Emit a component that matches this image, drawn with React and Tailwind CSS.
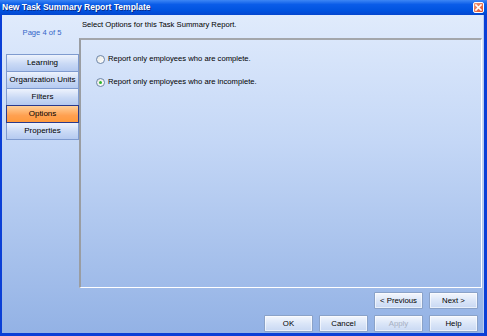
import React from "react";

const font = { fontFamily: '"Liberation Sans", Arial, sans-serif' };

function SideBtn({ label, active }) {
  return (
    <div
      className={
        "h-[18px] -mt-px first:mt-0 flex items-center justify-center text-[8px] text-black border " +
        (active
          ? "border-[#2a3a8c] bg-[linear-gradient(#ffd09a,#ffa050_60%,#ff9a3c)] relative z-10"
          : "border-[#7f9bcf] bg-[linear-gradient(#eef3fd,#c9d9f5_55%,#b5caf0)]")
      }
    >
      {label}
    </div>
  );
}

function Btn({ label, disabled }) {
  return (
    <div
      className={
        "w-[49px] h-[17px] flex items-center justify-center text-[7.8px] border border-[#8aa2c8] rounded-[1px] bg-[linear-gradient(#f4f7fd,#dbe6f8_50%,#c8d8f3)] shadow-[inset_0_0_0_1px_rgba(255,255,255,0.6)] " +
        (disabled ? "text-[#a7b0c2]" : "text-black")
      }
    >
      {label}
    </div>
  );
}

function Radio({ checked, label }) {
  return (
    <div className="flex items-center gap-[3px] h-[10px]">
      <div className="w-[9px] h-[9px] rounded-full border border-[#6e86a8] bg-[linear-gradient(135deg,#e6e6e0,#ffffff)] flex items-center justify-center">
        {checked && <div className="w-[3px] h-[3px] rounded-full bg-[#2fb52f]" />}
      </div>
      <span className="text-[7.65px] text-black leading-none">{label}</span>
    </div>
  );
}

export default function App() {
  return (
    <div className="w-[487px] h-[336px] flex flex-col bg-[#0a3fd6] overflow-hidden" style={font}>
      <div className="h-[15px] flex items-center justify-between pl-[2px] pr-[2px] bg-[linear-gradient(#3d86f5,#0a5ce8_30%,#0053e0_70%,#0446cf)]">
        <span className="text-white font-bold text-[8.5px] leading-none [text-shadow:1px_1px_0_#0a2a88]">
          New Task Summary Report Template
        </span>
        <div className="w-[11px] h-[11px] rounded-[2px] border border-white bg-[linear-gradient(135deg,#f09a7c,#e0502a)] flex items-center justify-center mr-[1px]">
          <svg width="7" height="7" viewBox="0 0 7 7">
            <path d="M1 1 L6 6 M6 1 L1 6" stroke="white" strokeWidth="1.6" strokeLinecap="square" />
          </svg>
        </div>
      </div>
      <div className="flex-1 flex flex-col ml-[2px] mr-[3px] mb-[3px] bg-[linear-gradient(#e0ebfc,#c4d7f6_40%,#93b2e5)] border-r border-[#b9cdf1]">
        <div className="h-[273px] flex">
          <div className="w-[77px] flex flex-col">
            <div className="h-[39px] pt-[14px] text-center text-[7.6px] leading-none text-[#3466c8] pl-[3px]">
              Page 4 of 5
            </div>
            <div className="ml-[4px] w-[73px] flex flex-col">
              <SideBtn label="Learning" />
              <SideBtn label="Organization Units" />
              <SideBtn label="Filters" />
              <SideBtn label="Options" active />
              <SideBtn label="Properties" />
            </div>
          </div>
          <div className="flex-1 flex flex-col mr-[1px]">
            <div className="h-[23px] pl-[3px] pt-[6px] text-[7.65px] leading-none text-black">
              Select Options for this Task Summary Report.
            </div>
            <div className="flex-1 border-t-2 border-l-2 border-t-[#a3a6ab] border-l-[#9a9da2] border-r border-b border-r-white border-b-white pl-[15px] pt-[14px] flex flex-col gap-[13px]">
              <Radio label="Report only employees who are complete." />
              <Radio checked label="Report only employees who are incomplete." />
            </div>
          </div>
        </div>
        <div className="flex justify-end gap-[6px] pr-[5px] mt-[4px]">
          <Btn label="< Previous" />
          <Btn label="Next >" />
        </div>
        <div className="flex justify-end gap-[6px] pr-[5px] mt-[6px]">
          <Btn label="OK" />
          <Btn label="Cancel" />
          <Btn label="Apply" disabled />
          <Btn label="Help" />
        </div>
      </div>
    </div>
  );
}
